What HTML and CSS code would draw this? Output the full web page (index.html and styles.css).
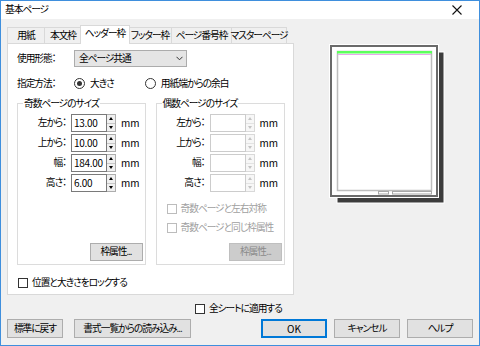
FILE: index.html
```html
<!DOCTYPE html>
<html lang="ja">
<head>
<meta charset="utf-8">
<title>基本ページ</title>
<link rel="stylesheet" href="styles.css">
</head>
<body>
<div class="window">
  <div class="titlebar">
    <span class="title">基本ページ</span>
    <svg class="close" width="10" height="10" viewBox="0 0 10 10"><path d="M0.5 0.5L9.5 9.5M9.5 0.5L0.5 9.5" stroke="#111" stroke-width="1.1" fill="none"/></svg>
  </div>
  <div class="body">
    <div class="top">
      <div class="tabarea">
        <div class="tabs">
          <div class="tab t1">用紙</div>
          <div class="tab t2">本文枠</div>
          <div class="tab t3 sel">ヘッダー枠</div>
          <div class="tab t4">フッター枠</div>
          <div class="tab t5">ページ番号枠</div>
          <div class="tab t6">マスターページ</div>
        </div>
        <div class="panel">
          <div class="row r1">
            <span class="lbl">使用形態：</span>
            <div class="combo"><span>全ページ共通</span><svg width="7" height="5" viewBox="0 0 7 5"><path d="M0.5 0.8L3.5 3.8L6.5 0.8" stroke="#333" fill="none" stroke-width="1"/></svg></div>
          </div>
          <div class="row r2">
            <span class="lbl">指定方法：</span>
            <label class="radio on"><span class="dot"></span>大きさ</label>
            <label class="radio r-second"><span class="dot"></span>用紙端からの余白</label>
          </div>
          <div class="groups">
            <fieldset class="grp">
              <legend>奇数ページのサイズ</legend>
              <div class="fields">
                <span class="flbl">左から：</span><div class="spin"><span class="val">13.00</span><span class="arr"><i class="up"></i><i class="dn"></i></span></div><span class="unit">mm</span>
                <span class="flbl">上から：</span><div class="spin"><span class="val">10.00</span><span class="arr"><i class="up"></i><i class="dn"></i></span></div><span class="unit">mm</span>
                <span class="flbl">幅：</span><div class="spin"><span class="val">184.00</span><span class="arr"><i class="up"></i><i class="dn"></i></span></div><span class="unit">mm</span>
                <span class="flbl">高さ：</span><div class="spin"><span class="val">6.00</span><span class="arr"><i class="up"></i><i class="dn"></i></span></div><span class="unit">mm</span>
              </div>
              <button class="btn small">枠属性...</button>
            </fieldset>
            <fieldset class="grp right">
              <legend>偶数ページのサイズ</legend>
              <div class="fields">
                <span class="flbl">左から：</span><div class="spin off"><span class="val"></span><span class="arr"><i class="up"></i><i class="dn"></i></span></div><span class="unit">mm</span>
                <span class="flbl">上から：</span><div class="spin off"><span class="val"></span><span class="arr"><i class="up"></i><i class="dn"></i></span></div><span class="unit">mm</span>
                <span class="flbl">幅：</span><div class="spin off"><span class="val"></span><span class="arr"><i class="up"></i><i class="dn"></i></span></div><span class="unit">mm</span>
                <span class="flbl">高さ：</span><div class="spin off"><span class="val"></span><span class="arr"><i class="up"></i><i class="dn"></i></span></div><span class="unit">mm</span>
              </div>
              <label class="check dis c1"><span class="box"></span>奇数ページと左右対称</label>
              <label class="check dis c2"><span class="box"></span>奇数ページと同じ枠属性</label>
              <button class="btn small dis">枠属性...</button>
            </fieldset>
          </div>
          <label class="check lock"><span class="box"></span>位置と大きさをロックする</label>
        </div>
      </div>
      <svg class="preview" width="118" height="162" viewBox="0 0 118 162">
        <rect x="8" y="8" width="107" height="151" fill="#3c3c3c" stroke="#ffffff" stroke-width="1"/>
        <rect x="2" y="2" width="106" height="150" fill="#ffffff" stroke="#6a6a6a" stroke-width="2"/>
        <rect x="0.5" y="0.5" width="109" height="153" fill="none" stroke="#ffffff" stroke-width="1"/>
        <rect x="8.5" y="7.5" width="94" height="139" fill="none" stroke="#bdbdbd" stroke-width="1.5"/>
        <rect x="8" y="7" width="95" height="2.5" fill="#5cff5c"/>
        <line x1="9" y1="10.5" x2="102" y2="10.5" stroke="#e8a8ec" stroke-width="1"/>
        <rect x="49.5" y="147.5" width="10" height="2.5" fill="#fff" stroke="#a8a8a8" stroke-width="1"/>
        <rect x="63.5" y="147.5" width="39" height="2.5" fill="#fff" stroke="#a8a8a8" stroke-width="1"/>
      </svg>
    </div>
    <label class="check apply"><span class="box"></span>全シートに適用する</label>
    <div class="buttons">
      <button class="btn b-reset">標準に戻す</button>
      <button class="btn b-load">書式一覧からの読み込み...</button>
      <span class="spacer"></span>
      <button class="btn b-dlg default">OK</button>
      <button class="btn b-dlg">キャンセル</button>
      <button class="btn b-dlg">ヘルプ</button>
    </div>
  </div>
</div>
</body>
</html>
```
FILE: styles.css
```css
* { box-sizing: border-box; margin: 0; padding: 0; }
html, body { width: 480px; height: 346px; overflow: hidden; background: #f0f0f0; }
body {
  font-family: "Noto Sans CJK JP", "Noto Sans", sans-serif;
  font-size: 9.7px;
  font-feature-settings: "palt";
  letter-spacing: -1px;
  color: #000;
  line-height: 1;
}
.window {
  width: 480px; height: 346px;
  border: 1px solid #3f8fdd;
  display: flex; flex-direction: column;
  background: #f0f0f0;
}
.titlebar {
  height: 18px; background: #fff;
  display: flex; align-items: center; justify-content: space-between;
  padding: 0 17px 0 4px;
}
.close { display: block; }
.body {
  flex: 1;
  padding: 6px 6px 7px 6px;
  display: flex; flex-direction: column;
}
.top { display: flex; align-items: flex-start; }
.tabarea { width: 287px; flex: none; }
.tabs { display: flex; height: 18px; align-items: flex-end; position: relative; z-index: 1; }
.tab {
  height: 16px;
  border: 1px solid #d9d9d9; border-bottom: none;
  margin-right: -1px;
  display: flex; align-items: center; justify-content: center;
  background: #f0f0f0;
  white-space: nowrap;
}
.t1 { width: 38px; }
.t2 { width: 38px; }
.t3 { width: 48px; }
.t4 { width: 44px; }
.t5 { width: 61px; }
.t6 { width: 56px; }
.tab.sel {
  height: 19px; margin-bottom: -1px;
  background: #fff;
  margin-left: -1px; width: 50px; margin-right: -2px;
  position: relative; z-index: 2;
  padding-bottom: 2px;
}
.panel {
  height: 252px;
  background: #fff;
  border: 1px solid #d9d9d9;
  padding: 6px 8px 0 9px;
  display: flex; flex-direction: column;
}
.row { display: flex; align-items: center; height: 17px; }
.r2 { margin-top: 8px; }
.lbl { width: 57px; flex: none; }
.combo {
  width: 113px; height: 17px;
  background: #e5e5e5; border: 1px solid #acacac;
  display: flex; align-items: center; justify-content: space-between;
  padding: 0 3px 0 4px;
}
.combo svg { display: block; }
.radio { display: flex; align-items: center; white-space: nowrap; }
.radio .dot {
  width: 11px; height: 11px; border-radius: 50%;
  border: 1px solid #333; background: #fff;
  margin-right: 5px; position: relative;
}
.radio.on .dot::after {
  content: ""; position: absolute; left: 2px; top: 2px;
  width: 5px; height: 5px; border-radius: 50%; background: #333;
}
.r-second { margin-left: 31px; }
.groups { display: flex; margin-top: 4px; height: 169px; }
.grp {
  width: 129px;
  border: 1px solid #dcdcdc;
  padding: 4px 2px 3px 0;
  display: flex; flex-direction: column; align-items: stretch;
}
.grp.right { width: 130px; margin-left: 10px; }
.grp legend {
  margin-left: 5px; padding: 0 1px;
  line-height: 14px; height: 14px;
}
.fields {
  display: grid;
  grid-template-columns: 48px 45px auto;
  column-gap: 5px; row-gap: 2px;
  align-items: center;
}
.flbl { text-align: right; white-space: nowrap; }
.spin { display: flex; height: 18px; }
.spin .val {
  width: 36px; height: 18px;
  border: 1px solid #7a7a7a; background: #fff;
  padding-left: 2px;
  display: flex; align-items: center;
  letter-spacing: -0.3px;
  font-size: 10px;
}
.spin .arr {
  width: 9px;
  display: flex; flex-direction: column;
  border: 1px solid #adadad; border-left: none;
}
.spin .arr i {
  flex: 1; background: #f0f0f0;
  display: flex; align-items: center; justify-content: center;
}
.spin .arr i.up { border-bottom: 1px solid #c8c8c8; }
.spin .arr i::before {
  content: ""; width: 0; height: 0;
  border-left: 2.5px solid transparent; border-right: 2.5px solid transparent;
}
.spin .arr i.up::before { border-bottom: 3px solid #000; }
.spin .arr i.dn::before { border-top: 3px solid #000; }
.spin.off .val { border-color: #cccccc; }
.spin.off .arr { border-color: #d9d9d9; }
.spin.off .arr i { background: #f7f7f7; }
.spin.off .arr i.up { border-bottom-color: #e3e3e3; }
.spin.off .arr i.up::before { border-bottom-color: #c4c4c4; }
.spin.off .arr i.dn::before { border-top-color: #c4c4c4; }
.unit { letter-spacing: 0; font-size: 10px; }
.check { display: flex; align-items: center; white-space: nowrap; height: 14px; }
.check .box {
  width: 10px; height: 10px; border: 1px solid #333; background: #fff;
  margin-right: 4px;
}
.check.dis { color: #a0a0a0; }
.check.dis .box { border-color: #bcbcbc; }
.c1 { margin: 10px 0 0 10px; }
.c2 { margin: 5px 0 0 10px; }
.btn {
  font: inherit; letter-spacing: inherit; font-feature-settings: inherit;
  color: #000;
  background: #e1e1e1; border: 1px solid #adadad;
  height: 19px;
  display: flex; align-items: center; justify-content: center;
  white-space: nowrap;
}
.btn.small { width: 53px; height: 18px; margin-top: auto; align-self: flex-end; }
.btn.dis { background: #cccccc; border-color: #bfbfbf; color: #8a8a8a; }
.lock { margin: 11px 0 0 1px; }
.apply { margin: 7px 0 0 188px; }
.buttons { display: flex; margin-top: 3px; }
.b-reset { width: 56px; }
.b-load { width: 117px; margin-left: 11px; }
.spacer { flex: 1; }
.b-dlg { width: 66px; margin-left: 7px; }
.b-dlg.default { border-color: #0078d7; box-shadow: inset 0 0 0 1px #0078d7; letter-spacing: 0; font-size: 10px; }
.preview { display: block; margin: 19px 0 0 35px; }
```
